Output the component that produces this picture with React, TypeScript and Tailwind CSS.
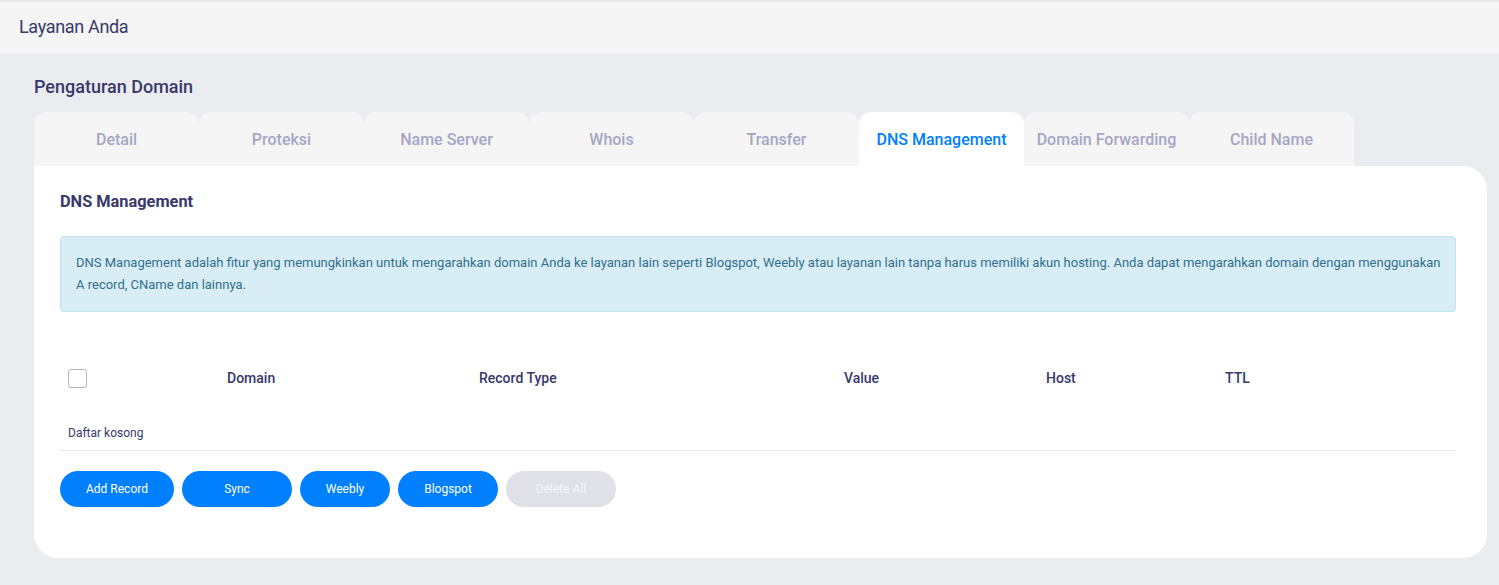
const tabs = ["Detail", "Proteksi", "Name Server", "Whois", "Transfer", "DNS Management", "Domain Forwarding", "Child Name"];
const buttons = [
  { label: "Add Record", w: "w-[114px]" },
  { label: "Sync", w: "w-[110px]" },
  { label: "Weebly", w: "w-[90px]" },
  { label: "Blogspot", w: "w-[100px]" },
];

export default function App() {
  return (
    <div className="h-[585px] overflow-hidden bg-[#ebecf0] font-['Roboto',sans-serif] text-[#38386a]">
      <header className="flex h-[53px] items-start border-t-2 border-[#e9e9e9] bg-[#f5f5f5] pl-[19px] text-[18px] leading-[49px] tracking-[-0.33px]">
        Layanan Anda
      </header>
      <main className="pl-[34px] pr-3">
        <h1 className="mt-[21px] h-[26px] text-[18px] font-medium leading-[26px]">Pengaturan Domain</h1>
        <nav className="mt-[12px] flex">
          {tabs.map((t) => (
            <div
              key={t}
              className={
                t === "DNS Management"
                  ? "flex h-[54px] w-[165px] items-center justify-center rounded-t-[12px] bg-white pt-[2px] text-[16px] font-medium text-[#007fff]"
                  : "flex h-[54px] w-[165px] items-center justify-center rounded-t-[12px] bg-[#f5f5f5] pt-[2px] text-[16px] font-medium text-[#a5a6c6]"
              }
            >
              {t}
            </div>
          ))}
        </nav>
        <section className="h-[392px] rounded-b-[24px] rounded-tr-[24px] bg-white pl-[26px] pr-[31px] pt-[26px]">
          <h2 className="h-[19px] text-[16.35px] font-bold leading-[19px]">DNS Management</h2>
          <div className="mt-[25px] h-[76px] rounded-[4px] border border-[#bee5eb] bg-[#d8edf5] pl-[15px] pr-[10px] py-[15px] text-[13px] leading-[22px] text-[#31708f]">
            DNS Management adalah fitur yang memungkinkan untuk mengarahkan domain Anda ke layanan lain seperti Blogspot, Weebly atau layanan lain tanpa harus memiliki akun hosting. Anda dapat mengarahkan domain dengan menggunakan A record, CName dan lainnya.
          </div>
          <div className="mt-[38px] flex h-[56px] items-center text-[14px] font-medium">
            <div className="w-[167px] pl-[8px]">
              <div className="h-[19px] w-[19px] rounded-[3px] border border-[#b5b5b5] bg-white" />
            </div>
            <div className="w-[252px]">Domain</div>
            <div className="w-[365px]">Record Type</div>
            <div className="w-[202px]">Value</div>
            <div className="w-[179px]">Host</div>
            <div>TTL</div>
          </div>
          <div className="mt-[11px] h-[34px] border-b border-[#e8e8e8] pl-[8px] pt-[7px] text-[12px] leading-[18px]">Daftar kosong</div>
          <div className="mt-[20px] flex gap-2">
            {buttons.map((b) => (
              <button key={b.label} className={`h-9 ${b.w} rounded-full bg-[#007fff] text-[12px] text-white`}>
                {b.label}
              </button>
            ))}
            <button className="h-9 w-[110px] rounded-full bg-[#e0e0e9] text-[12px] text-[#f5f5f8]">Delete All</button>
          </div>
        </section>
      </main>
    </div>
  );
}
